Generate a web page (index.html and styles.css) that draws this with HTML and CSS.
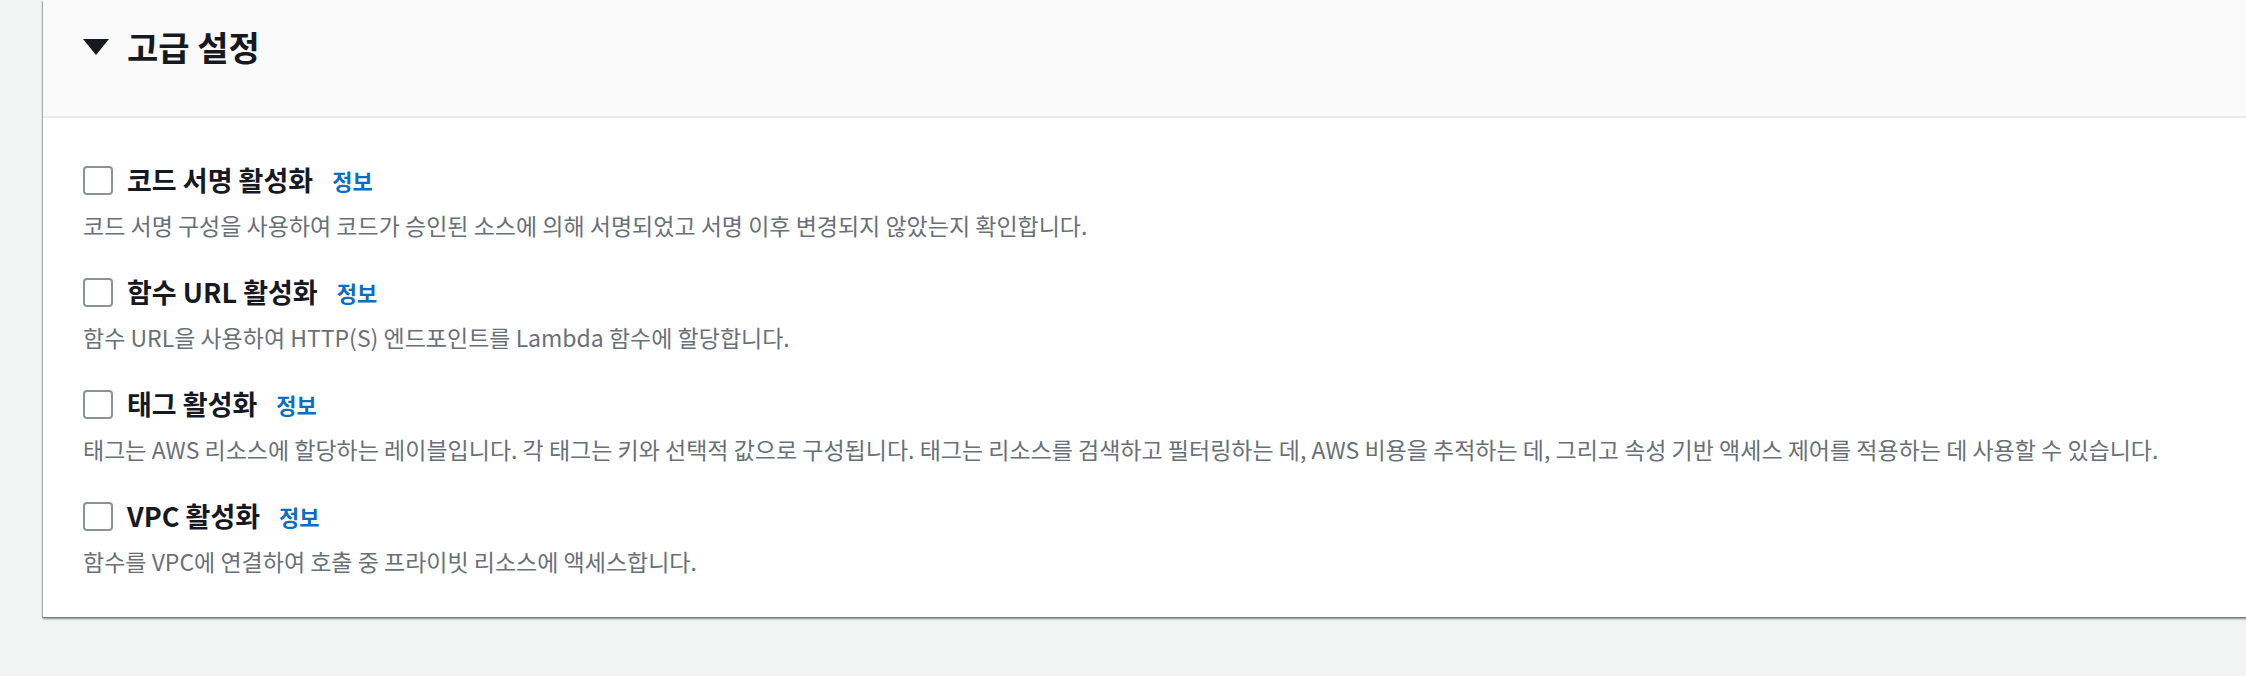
FILE: index.html
```html
<!DOCTYPE html>
<html>
	<head>
		<meta charset="utf-8">
		<link rel="stylesheet" href="styles.css">
	</head>
	<body>
		<main class="page">
			<section class="panel">
				<header class="panel-header">
					<svg class="caret" width="26" height="16" viewBox="0 0 26 16"><polygon points="0,0 26,0 13,16" fill="#16191f"/></svg>
					<h2>고급 설정</h2>
				</header>
				<div class="panel-body">
					<div class="field">
						<label class="check-row">
							<span class="checkbox"></span>
							<span class="label">코드 서명 활성화</span>
							<a class="info">정보</a>
						</label>
						<p class="desc">코드 서명 구성을 사용하여 코드가 승인된 소스에 의해 서명되었고 서명 이후 변경되지 않았는지 확인합니다.</p>
					</div>
					<div class="field">
						<label class="check-row">
							<span class="checkbox"></span>
							<span class="label">함수 URL 활성화</span>
							<a class="info">정보</a>
						</label>
						<p class="desc">함수 URL을 사용하여 HTTP(S) 엔드포인트를 Lambda 함수에 할당합니다.</p>
					</div>
					<div class="field">
						<label class="check-row">
							<span class="checkbox"></span>
							<span class="label">태그 활성화</span>
							<a class="info">정보</a>
						</label>
						<p class="desc">태그는 AWS 리소스에 할당하는 레이블입니다. 각 태그는 키와 선택적 값으로 구성됩니다. 태그는 리소스를 검색하고 필터링하는 데, AWS 비용을 추적하는 데, 그리고 속성 기반 액세스 제어를 적용하는 데 사용할 수 있습니다.</p>
					</div>
					<div class="field">
						<label class="check-row">
							<span class="checkbox"></span>
							<span class="label">VPC 활성화</span>
							<a class="info">정보</a>
						</label>
						<p class="desc">함수를 VPC에 연결하여 호출 중 프라이빗 리소스에 액세스합니다.</p>
					</div>
				</div>
			</section>
		</main>
	</body>
</html>
```

FILE: styles.css
```css
body {
	margin: 0;
	background: #f2f3f3;
	font-family: "Noto Sans CJK KR", "Noto Sans", sans-serif;
	color: #16191f;
	overflow: hidden;
}
.page {
	padding-left: 43px;
	height: 676px;
}
.panel {
	margin-right: -10px;
	background: #fff;
	box-shadow: 0 2px 2px 0 rgba(0, 28, 36, 0.45), -1px 1px 1px 0 rgba(0, 28, 36, 0.2);
}
.panel-header {
	display: flex;
	align-items: center;
	gap: 18px;
	background: #fafafa;
	border-bottom: 2px solid #eaeded;
	padding: 25px 40px 47px 40px;
}
.panel-header h2 {
	margin: 0;
	font-size: 34px;
	line-height: 44px;
	font-weight: 700;
}
.panel-body {
	display: flex;
	flex-direction: column;
	gap: 29px;
	padding: 40px 40px 40px 40px;
}
.check-row {
	display: flex;
	align-items: center;
	height: 44px;
}
.checkbox {
	box-sizing: border-box;
	width: 30px;
	height: 29px;
	border: 2px solid #879596;
	border-radius: 4px;
	background: #fff;
	margin-right: 14px;
}
.label {
	font-size: 27px;
	font-weight: 700;
	line-height: 44px;
}
.info {
	margin-left: 19px;
	font-size: 22px;
	font-weight: 700;
	color: #0a6fc2;
	cursor: pointer;
}
.desc {
	margin: 7px 0 0 0;
	font-size: 23px;
	line-height: 32px;
	color: #687078;
}
```
